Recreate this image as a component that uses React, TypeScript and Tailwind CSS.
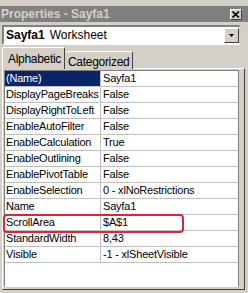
const rows: [string, string][] = [
  ['(Name)', 'Sayfa1'],
  ['DisplayPageBreaks', 'False'],
  ['DisplayRightToLeft', 'False'],
  ['EnableAutoFilter', 'False'],
  ['EnableCalculation', 'True'],
  ['EnableOutlining', 'False'],
  ['EnablePivotTable', 'False'],
  ['EnableSelection', '0 - xlNoRestrictions'],
  ['Name', 'Sayfa1'],
  ['ScrollArea', '$A$1'],
  ['StandardWidth', '8,43'],
  ['Visible', '-1 - xlSheetVisible'],
]

export default function App() {
  return (
    <div className="relative w-[248px] h-[293px] bg-[#d4d0c8] flex flex-col text-[11px] text-black font-['Liberation_Sans',Arial,sans-serif] overflow-hidden">
      {/* title bar */}
      <div className="mt-[6px] h-[16px] bg-[#808080] flex items-center justify-between pl-[1px] pr-[6px]">
        <span className="font-bold text-[12px] text-[#d4d0c8] leading-none">Properties - Sayfa1</span>
        <div className="w-[12px] h-[11px] bg-[#d4d0c8] border-t border-l border-white border-r border-b border-r-[#404040] border-b-[#404040] flex items-center justify-center">
          <svg width="8" height="7" viewBox="0 0 8 7">
            <path d="M0.5 0.5L7 6.5M7 0.5L0.5 6.5" stroke="#000" strokeWidth="1.6" />
          </svg>
        </div>
      </div>

      {/* object combo */}
      <div className="mt-[3px] ml-[2px] mr-[7px] h-[20px] bg-white border-2 border-t-[#808080] border-l-[#808080] border-b-white border-r-[#d4d0c8] flex items-center">
        <span className="pl-[2px] font-bold text-[12px]">Sayfa1</span>
        <span className="pl-[5px] text-[12px]">Worksheet</span>
        <div className="ml-auto w-[15px] h-[15px] bg-[#d4d0c8] border border-t-white border-l-white border-r-[#404040] border-b-[#404040] flex items-center justify-center">
          <svg width="5" height="3" viewBox="0 0 5 3">
            <path d="M0 0H5L2.5 3Z" fill="#000" />
          </svg>
        </div>
      </div>

      {/* tabs */}
      <div className="mt-[2px] ml-[2px] flex items-end h-[22px] -mb-[1px] relative z-10">
        <div className="h-[22px] w-[63px] shrink-0 bg-[#d4d0c8] border-t border-l border-white border-r border-r-[#404040] rounded-t-[2px] pl-[5px] pt-[5px] text-[12px] tracking-[-0.3px] leading-none whitespace-nowrap">
          Alphabetic
        </div>
        <div className="h-[18px] w-[68px] shrink-0 bg-[#d4d0c8] border-t border-white border-r border-r-[#404040] rounded-t-[2px] pl-[3px] pt-[4px] text-[12px] tracking-[-0.3px] leading-none whitespace-nowrap">
          Categorized
        </div>
      </div>

      {/* tab page */}
      <div className="flex-1 ml-[2px] mr-[3px] mb-[3px] border border-t-white border-l-white border-r-[#404040] border-b-[#404040] pt-[1px] pl-[1px] pr-[5px] pb-[2px] flex">
        <div className="flex-1 bg-white border border-t-[#808080] border-l-[#808080] border-b-white border-r-[#808080]">
          {rows.map(([k, v], i) => (
            <div key={k} className="flex h-[16px] border-b border-[#c0c0c0] tracking-[-0.2px]">
              <div
                className={
                  i === 0
                    ? 'w-[95px] shrink-0 bg-[#0a246a] text-white pl-[1px] leading-[15px] whitespace-nowrap overflow-hidden'
                    : 'w-[95px] shrink-0 pl-[1px] leading-[15px] whitespace-nowrap overflow-hidden'
                }
              >
                {k}
              </div>
              <div className="flex-1 border-l border-[#c0c0c0] pl-[2px] leading-[15px] whitespace-nowrap">{v}</div>
            </div>
          ))}
        </div>
      </div>

      {/* red highlight */}
      <div className="absolute left-[3px] top-[214px] w-[181px] h-[19px] border-2 border-[#d9263a] rounded-[4px]" />
    </div>
  )
}
